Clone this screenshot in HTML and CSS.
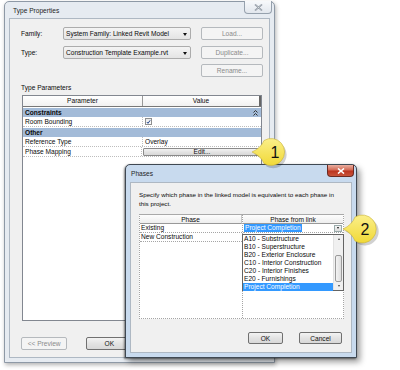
FILE: index.html
```html
<!DOCTYPE html>
<html lang="en">
<head>
    <meta charset="UTF-8">
    <title>Type Properties</title>
    <link rel="stylesheet" href="styles.css">
</head>
<body>
<div class="desk">
    <div class="win props">
        <div class="title">Type Properties
            <span class="close plain"><svg width="9" height="7" viewBox="0 0 9 7"><path d="M1 0.5 L8 6.5 M8 0.5 L1 6.5" stroke="#7d8792" stroke-width="1.6" fill="none"/><path d="M1 0.5 L8 6.5 M8 0.5 L1 6.5" stroke="#f4f6f8" stroke-width="0.5" fill="none"/></svg></span>
        </div>
        <div class="pane">
            <div class="row">
                <label>Family:</label>
                <div class="combo">System Family: Linked Revit Model<i class="arrow"></i></div>
                <button class="btn off">Load...</button>
            </div>
            <div class="row">
                <label>Type:</label>
                <div class="combo">Construction Template Example.rvt<i class="arrow"></i></div>
                <button class="btn off">Duplicate...</button>
            </div>
            <div class="row end">
                <button class="btn off">Rename...</button>
            </div>
            <div class="caption">Type Parameters</div>
            <div class="grid">
                <div class="head"><span>Parameter</span><span>Value</span></div>
                <div class="group">Constraints<svg width="5" height="6" viewBox="0 0 5 6"><path d="M0.5 2.5 L2.5 0.5 L4.5 2.5 M0.5 5.5 L2.5 3.5 L4.5 5.5" stroke="#333" stroke-width="1" fill="none"/></svg></div>
                <div class="prop">
                    <span>Room Bounding</span>
                    <span><i class="check"><svg width="6" height="6" viewBox="0 0 6 6"><path d="M1 3 L2.4 4.6 L5 1" stroke="#21448a" stroke-width="1.2" fill="none"/></svg></i></span>
                </div>
                <div class="group">Other</div>
                <div class="prop"><span>Reference Type</span><span>Overlay</span></div>
                <div class="prop"><span>Phase Mapping</span><span><button class="btn edit">Edit...</button></span></div>
            </div>
            <div class="foot">
                <button class="btn off">&lt;&lt; Preview</button>
                <button class="btn">OK</button>
                <button class="btn">Cancel</button>
                <button class="btn">Apply</button>
            </div>
        </div>
    </div>

    <div class="win phases">
        <div class="title">Phases
            <span class="close red"><svg width="8" height="6" viewBox="0 0 8 6"><path d="M1 0.5 L7 5.5 M7 0.5 L1 5.5" stroke="#fff" stroke-width="1.6" fill="none"/></svg></span>
        </div>
        <div class="pane">
            <p class="note">Specify which phase in the linked model is equivalent to each phase in<br>this project.</p>
            <div class="map">
                <div class="col">
                    <div class="hd">Phase</div>
                    <div class="cell">Existing</div>
                    <div class="cell">New Construction</div>
                </div>
                <div class="col link">
                    <div class="hd">Phase from link</div>
                    <div class="cell pick"><em>Project Completion</em><i class="drop"></i></div>
                    <div class="cell"></div>
                    <div class="list">
                        <ul>
                            <li>A10 - Substructure</li>
                            <li>B10 - Superstructure</li>
                            <li>B20 - Exterior Enclosure</li>
                            <li>C10 - Interior Construction</li>
                            <li>C20 - Interior Finishes</li>
                            <li>E20 - Furnishings</li>
                            <li class="on">Project Completion</li>
                        </ul>
                        <div class="bar">
                            <i class="up"></i>
                            <i class="track"></i>
                            <i class="thumb"></i>
                            <i class="rest"></i>
                            <i class="dn"></i>
                        </div>
                    </div>
                </div>
            </div>
            <div class="actions">
                <button class="btn ok">OK</button>
                <button class="btn cancel">Cancel</button>
            </div>
        </div>
    </div>

    <svg class="marks" width="400" height="370" viewBox="0 0 400 370">
        <defs>
            <linearGradient id="yel" x1="0" y1="0" x2="0" y2="1">
                <stop offset="0" stop-color="#fbef8a"/>
                <stop offset="1" stop-color="#f1d937"/>
            </linearGradient>
        </defs>
        <g>
            <path d="M253 153 Q262 149 265 141.5 A13.5 13.5 0 1 1 265 165 Q262 157 253 153 Z" fill="#000" opacity=".18" transform="translate(1.5 1.5)"/>
            <path d="M252 152 Q261 148 264 140.5 A13.5 13.5 0 1 1 264 163.5 Q261 156 252 152 Z" fill="url(#yel)" stroke="#c8b23a" stroke-width=".6"/>
            <text x="275" y="158" class="num">1</text>
        </g>
        <g>
            <path d="M344 230 Q353 226 356 218 A14 14 0 1 1 356 242 Q353 234 344 230 Z" fill="#000" opacity=".18" transform="translate(1.5 1.5)"/>
            <path d="M343 229 Q352 225 355 217 A14 14 0 1 1 355 241 Q352 233 343 229 Z" fill="url(#yel)" stroke="#c8b23a" stroke-width=".6"/>
            <text x="365" y="235" class="num">2</text>
        </g>
    </svg>
</div>
</body>
</html>
```

FILE: styles.css
```css
* {
    margin: 0;
    padding: 0;
    box-sizing: border-box;
    list-style: none;
}

body {
    background: #fff;
    font: 6.6px "Liberation Sans", Arial, sans-serif;
    color: #0a0a0a;
}

.desk {
    position: relative;
    width: 400px;
    height: 370px;
    overflow: hidden;
}

/* windows */
.win {
    position: absolute;
    display: flex;
    flex-direction: column;
    padding: 0 4px 4px;
    border: 1px solid #8e99a6;
    border-radius: 5px 5px 0 0;
}

.props {
    left: 4px;
    top: 1px;
    width: 271px;
    height: 362px;
    background: #e6ebf1;
    box-shadow: 1px 2px 4px rgba(0, 0, 0, .3);
}

.phases {
    left: 125px;
    top: 164px;
    width: 232px;
    height: 194px;
    background: #c8daee;
    border-color: #3f4852;
    box-shadow: -1px 1px 2px rgba(0, 0, 0, .45), 3px 4px 6px rgba(0, 0, 0, .4);
}

.title {
    position: relative;
    flex: none;
    height: 16px;
    line-height: 17px;
    padding-left: 4px;
    color: #1e1e1e;
}

.phases .title {
    height: 17px;
    line-height: 18px;
    padding-left: 1px;
}

.close {
    position: absolute;
    top: -1px;
    right: -2px;
    width: 28px;
    height: 13px;
    display: flex;
    align-items: center;
    justify-content: center;
    border: 1px solid #96a1ad;
    border-top: 0;
    border-radius: 0 0 4px 4px;
    background: linear-gradient(#f7f9fb, #e2e7ed);
}

.close.red {
    top: 0;
    width: 27px;
    height: 12px;
    border-color: #6b2a22;
    background: linear-gradient(#eab0a2, #d36a55 45%, #bb3420 55%, #c9543a);
}

.pane {
    flex: 1;
    display: flex;
    flex-direction: column;
    background: #f0f0f0;
    border: 1px solid #aeb8c3;
}

.props .pane {
    padding: 8px 6px 0 11px;
}

/* form rows */
.row {
    display: flex;
    align-items: center;
    height: 13px;
}

.row + .row {
    margin-top: 6px;
}

.row.end {
    margin-top: 5px;
    justify-content: flex-end;
}

.row label {
    width: 42px;
}

.combo {
    position: relative;
    width: 128px;
    height: 13px;
    line-height: 12px;
    padding-left: 2px;
    border: 1px solid #acacac;
    border-radius: 2px;
    background: linear-gradient(#f4f4f4, #e4e4e4);
    margin-right: 10px;
}

.arrow {
    position: absolute;
    right: 3px;
    top: 5px;
    border: 2px solid transparent;
    border-top: 3px solid #111;
    border-bottom: 0;
}

.btn {
    font: inherit;
    color: #111;
    height: 13px;
    border: 1px solid #707070;
    border-radius: 2px;
    background: linear-gradient(#f3f3f3, #e3e3e3 50%, #d8d8d8);
}

.row .btn {
    width: 62px;
}

.btn.off {
    color: #8a8a8a;
    border-color: #b5b9bd;
    background: #f4f4f4;
}

.caption {
    margin-top: 6px;
    line-height: 9px;
}

/* property grid */
.grid {
    margin: 3px 0 0 1px;
    width: 240px;
    height: 226px;
    background: #fff;
    border: 1px solid #828790;
}

.head {
    display: flex;
    height: 11px;
    line-height: 10px;
    text-align: center;
    border-bottom: 1px solid #777;
    background: linear-gradient(#fff, #f1f1f1);
}

.head span:first-child {
    width: 120px;
    border-right: 1px solid #999;
}

.head span:last-child {
    flex: 1;
    border-right: 2px solid #666;
}

.group {
    display: flex;
    align-items: center;
    justify-content: space-between;
    height: 9px;
    margin-top: 1px;
    padding: 0 3px 0 2px;
    font-weight: bold;
    background: #a3bbd8;
}

.prop {
    display: flex;
    height: 10px;
    line-height: 9px;
    border-bottom: 1px dotted #bdbdbd;
}

.prop span:first-child {
    width: 120px;
    padding-left: 2px;
    border-right: 1px dotted #bdbdbd;
}

.prop span:last-child {
    flex: 1;
    display: flex;
    align-items: center;
    padding-left: 2px;
}

.check {
    display: flex;
    align-items: center;
    justify-content: center;
    width: 7px;
    height: 7px;
    border: 1px solid #8e8f8f;
    background: linear-gradient(#e9e9e9, #fff);
}

.btn.edit {
    width: 118px;
    height: 8px;
    line-height: 6px;
    margin-left: -1px;
    border-color: #8a8a8a;
    border-radius: 1px;
}

.foot {
    display: flex;
    gap: 19px;
    margin-top: 16px;
}

.foot .btn {
    width: 54px;
}

/* phases dialog */
.phases .pane {
    padding: 7px 8px 0 8px;
}

.note {
    line-height: 9px;
    font-size: 6.25px;
    white-space: nowrap;
}

.map {
    display: flex;
    margin-top: 6px;
    width: 205px;
    height: 105px;
    background: #fff;
    border: 1px dotted #a5a5a5;
    border-top: 1px solid #a9a9a9;
}

.col {
    width: 103px;
    border-right: 1px dotted #a5a5a5;
}

.col.link {
    position: relative;
    flex: 1;
    border-right: 0;
}

.hd {
    height: 9px;
    line-height: 9px;
    text-align: center;
    border-bottom: 1px solid #999;
    background: linear-gradient(#fdfdfd, #eeeeee);
}

.col:first-child .hd {
    border-right: 1px solid #c8c8c8;
}

.cell {
    height: 9px;
    line-height: 8px;
    padding-left: 1px;
    border-bottom: 1px dotted #a5a5a5;
}

.pick {
    display: flex;
    align-items: center;
    justify-content: space-between;
    padding-right: 1px;
}

.pick em {
    font-style: normal;
    color: #fff;
    background: #3399ff;
    line-height: 8px;
    padding: 0 1px;
}

.drop {
    width: 8px;
    height: 7px;
    border: 1px solid #9aa;
    background: linear-gradient(#f4f4f4, #dcdcdc);
    display: flex;
    align-items: center;
    justify-content: center;
}

.drop::after {
    content: "";
    border: 1.5px solid transparent;
    border-top: 2px solid #111;
    border-bottom: 0;
}

.list {
    position: absolute;
    left: -1px;
    top: 19px;
    width: 102px;
    height: 57px;
    display: flex;
    background: #fff;
    border: 1px solid #646464;
}

.list ul {
    flex: 1;
}

.list li {
    height: 8px;
    line-height: 8px;
    padding-left: 1px;
    white-space: nowrap;
}

.list li.on {
    color: #fff;
    background: #3399ff;
}

.bar {
    width: 10px;
    display: flex;
    flex-direction: column;
    background: #f0f0f0;
    border-left: 1px solid #e2e2e2;
}

.bar i {
    display: block;
}

.up, .dn {
    height: 8px;
    display: flex !important;
    align-items: center;
    justify-content: center;
}

.up::after, .dn::after {
    content: "";
    border: 1.5px solid transparent;
}

.up::after {
    border-bottom: 2px solid #444;
    border-top: 0;
}

.dn::after {
    border-top: 2px solid #444;
    border-bottom: 0;
}

.track {
    height: 12px;
}

.thumb {
    height: 27px;
    margin: 0 1px;
    border: 1px solid #9a9a9a;
    border-radius: 2px;
    background: linear-gradient(90deg, #f3f3f3, #dedede);
}

.rest {
    flex: 1;
}

.actions {
    display: flex;
    justify-content: flex-end;
    gap: 16px;
    margin-top: 13px;
    padding-right: 1px;
}

.actions .btn {
    height: 12px;
}

.btn.ok {
    width: 35px;
}

.btn.cancel {
    width: 43px;
}

/* callouts */
.marks {
    position: absolute;
    left: 0;
    top: 0;
    pointer-events: none;
}

.num {
    font: 16px "Liberation Sans", Arial, sans-serif;
    text-anchor: middle;
    fill: #111;
}
```
